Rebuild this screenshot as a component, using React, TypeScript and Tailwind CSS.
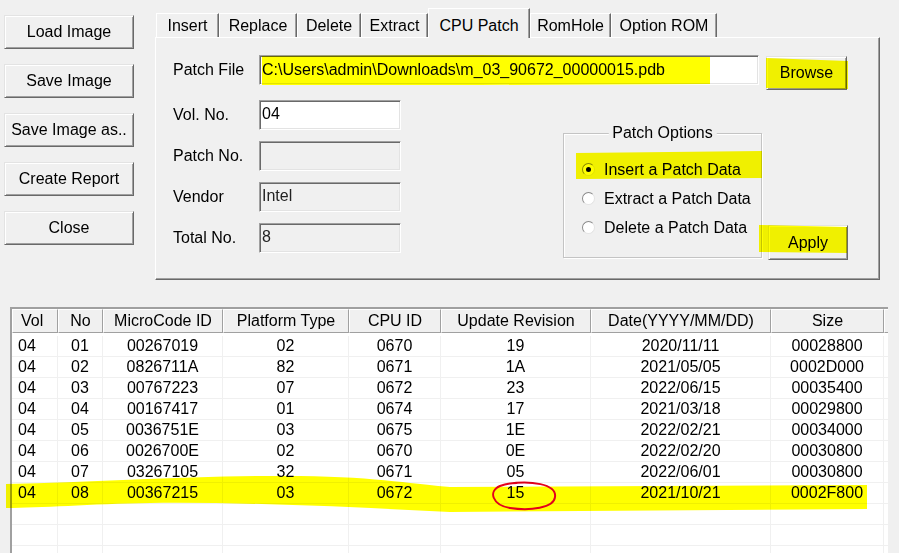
import React from 'react'

const raised =
  'border border-t-[#e3e3e3] border-l-[#e3e3e3] border-r-[#696969] border-b-[#696969] shadow-[inset_1px_1px_0_#ffffff,inset_-1px_-1px_0_#a0a0a0]'
const sunken =
  'border border-t-[#a0a0a0] border-l-[#a0a0a0] border-r-[#ffffff] border-b-[#ffffff] shadow-[inset_1px_1px_0_#696969,inset_-1px_-1px_0_#e3e3e3]'

const Button = ({ label, className = '' }: { label: string; className?: string }) => (
  <button
    type="button"
    className={`flex items-center justify-center bg-[#f0f0f0] text-[16px] leading-none text-black ${raised} ${className}`}
  >
    {label}
  </button>
)

const tabs = [
  { name: 'Insert', w: 'w-[63px]' },
  { name: 'Replace', w: 'w-[78px]' },
  { name: 'Delete', w: 'w-[64px]' },
  { name: 'Extract', w: 'w-[67px]' },
  { name: 'CPU Patch', w: 'w-[102px]' },
  { name: 'RomHole', w: 'w-[81px]' },
  { name: 'Option ROM', w: 'w-[106px]' },
]

const columns = [
  { name: 'Vol', w: 'w-[46px]', left: true },
  { name: 'No', w: 'w-[45px]' },
  { name: 'MicroCode ID', w: 'w-[120px]' },
  { name: 'Platform Type', w: 'w-[126px]' },
  { name: 'CPU ID', w: 'w-[92px]' },
  { name: 'Update Revision', w: 'w-[150px]' },
  { name: 'Date(YYYY/MM/DD)', w: 'w-[180px]' },
  { name: 'Size', w: 'w-[113px]' },
]

const rows = [
  ['04', '01', '00267019', '02', '0670', '19', '2020/11/11', '00028800'],
  ['04', '02', '0826711A', '82', '0671', '1A', '2021/05/05', '0002D000'],
  ['04', '03', '00767223', '07', '0672', '23', '2022/06/15', '00035400'],
  ['04', '04', '00167417', '01', '0674', '17', '2021/03/18', '00029800'],
  ['04', '05', '0036751E', '03', '0675', '1E', '2022/02/21', '00034000'],
  ['04', '06', '0026700E', '02', '0670', '0E', '2022/02/20', '00030800'],
  ['04', '07', '03267105', '32', '0671', '05', '2022/06/01', '00030800'],
  ['04', '08', '00367215', '03', '0672', '15', '2021/10/21', '0002F800'],
  ['', '', '', '', '', '', '', ''],
  ['', '', '', '', '', '', '', ''],
  ['', '', '', '', '', '', '', ''],
]

const Field = ({ label, value = '', disabled = false }: { label: string; value?: string; disabled?: boolean }) => (
  <div className="flex items-center h-[30px]">
    <span className="w-[86px] text-[16px] text-black">{label}</span>
    <div
      className={`w-[142px] h-[30px] flex items-center px-[2px] pb-[3px] text-[16px] ${sunken} ${
        disabled ? 'bg-[#f0f0f0] text-[#222222]' : 'bg-white text-black'
      }`}
    >
      {value}
    </div>
  </div>
)

const Radio = ({ label, checked = false }: { label: string; checked?: boolean }) => (
  <div className="flex items-center h-[29px] gap-[9px]">
    <span className="w-[13px] h-[13px] rounded-full bg-white border border-t-[#8a8a8a] border-l-[#8a8a8a] border-r-[#e3e3e3] border-b-[#e3e3e3] flex items-center justify-center">
      {checked && <span className="w-[5px] h-[5px] rounded-full bg-black" />}
    </span>
    <span className="text-[16px] text-black">{label}</span>
  </div>
)

export default function App() {
  return (
    <div className="relative w-[899px] h-[553px] overflow-hidden bg-[#f0f0f0] font-['Liberation_Sans',Arial,sans-serif] text-black">
      <div className="flex h-[307px]">
        {/* left buttons */}
        <div className="ml-[4px] mt-[15px] w-[130px] flex flex-col gap-[15px]">
          <Button label="Load Image" className="h-[34px]" />
          <Button label="Save Image" className="h-[34px]" />
          <Button label="Save Image as.." className="h-[34px]" />
          <Button label="Create Report" className="h-[34px]" />
          <Button label="Close" className="h-[34px]" />
        </div>

        {/* tab control */}
        <div className="ml-[21px] mt-[8px] w-[725px]">
          <div className="flex items-end h-[29px] pl-[1px]">
            {tabs.map((t) =>
              t.name === 'CPU Patch' ? (
                <div
                  key={t.name}
                  className={`${t.w} relative z-10 -mb-[1px] h-[30px] flex items-start justify-center pt-[5px] bg-[#f0f0f0] text-[16px] border-t border-l border-r border-t-white border-l-white border-r-[#696969] shadow-[inset_-1px_0_0_#a0a0a0]`}
                >
                  {t.name}
                </div>
              ) : (
                <div
                  key={t.name}
                  className={`${t.w} h-[24px] flex items-center justify-center bg-[#f0f0f0] text-[16px] border-t border-l border-r border-t-white border-l-white border-r-[#696969] shadow-[inset_-1px_0_0_#a0a0a0]`}
                >
                  {t.name}
                </div>
              )
            )}
          </div>

          <div className="h-[243px] bg-[#f0f0f0] border border-t-white border-l-white border-r-[#696969] border-b-[#696969] shadow-[inset_-1px_-1px_0_#a0a0a0] pt-[17px] pl-[17px]">
            <div className="flex items-start">
              <span className="w-[86px] h-[30px] flex items-center text-[16px]">Patch File</span>
              <div className={`w-[500px] h-[30px] flex items-center px-[2px] bg-white text-[16px] ${sunken}`}>
                C:\Users\admin\Downloads\m_03_90672_00000015.pdb
              </div>
              <Button label="Browse" className="ml-[7px] mt-[1px] w-[81px] h-[34px]" />
            </div>

            <div className="flex items-start mt-[10px]">
              <div className="flex flex-col gap-[11px]">
                <Field label="Vol. No." value="04" />
                <Field label="Patch No." disabled />
                <Field label="Vendor" value="Intel" disabled />
                <Field label="Total No." value="8" disabled />
              </div>

              <div className="relative ml-[162px] mt-[33px] w-[199px] h-[125px] border border-[#c4c4c4] shadow-[inset_1px_1px_0_#ffffff,1px_1px_0_#ffffff] pl-[18px] pt-[21px]">
                <span className="absolute -top-[10px] left-1/2 -translate-x-1/2 px-[4px] bg-[#f0f0f0] text-[16px] leading-[18px] whitespace-nowrap">
                  Patch Options
                </span>
                <Radio label="Insert a Patch Data" checked />
                <Radio label="Extract a Patch Data" />
                <Radio label="Delete a Patch Data" />
              </div>

              <Button label="Apply" className="ml-[6px] mt-[125px] w-[80px] h-[35px]" />
            </div>
          </div>
        </div>
      </div>

      {/* list view */}
      <div className="ml-[10px] w-[878px] h-[260px] bg-white border-t-2 border-l-2 border-[#a0a0a0] border-r-[#e3e3e3] border-b-[#e3e3e3]">
        <div className="flex h-[24px]">
          {columns.map((c) => (
            <div
              key={c.name}
              className={`${c.w} h-[24px] flex items-center text-[16px] bg-[#f0f0f0] border-t border-l border-t-white border-l-white border-r border-b border-r-[#a0a0a0] border-b-[#a0a0a0] ${
                c.left ? 'pl-[8px]' : 'justify-center'
              }`}
            >
              {c.name}
            </div>
          ))}
          <div className="flex-1 h-[24px] bg-[#f0f0f0] border-t border-l border-b border-t-white border-l-white border-b-[#a0a0a0]" />
        </div>
        <div className="mt-[3px]">
          {rows.map((r, i) => (
            <div key={i} className="flex h-[21px] border-b border-[#f0f0f0]">
              {r.map((v, j) => (
                <div
                  key={j}
                  className={`${columns[j].w} flex items-center text-[16px] leading-none border-r border-[#f0f0f0] ${
                    columns[j].left ? 'pl-[6px]' : 'justify-center'
                  }`}
                >
                  {v}
                </div>
              ))}
            </div>
          ))}
        </div>
      </div>

      {/* marker annotations */}
      <svg
        className="absolute left-0 top-0 pointer-events-none mix-blend-multiply"
        width="899"
        height="553"
        viewBox="0 0 899 553"
      >
        <g fill="#ffff00">
          <path d="M262,56 L480,55 L710,57 L710,84 L480,85 L262,85 Z" />
          <path d="M766,58 L848,61 L848,89 L766,88 Z" />
          <path d="M576,153 L762,151 L762,178 L576,179 Z" />
          <path d="M759,225 L847,227 L847,253 L759,252 Z" />
          <path d="M6,484 C100,482 200,475 300,476 C380,477 420,485 450,487 L867,485 L867,509 L450,512 C350,507 250,502 150,503 C90,504 40,508 6,508 Z" />
        </g>
        <path
          d="M507,484 C530,480 557,484 555,497 C554,508 530,511 510,508 C492,505 488,491 500,486 C505,484 512,483 517,483"
          fill="none"
          stroke="#e4001b"
          strokeWidth="2"
          strokeLinecap="round"
        />
      </svg>
    </div>
  )
}
